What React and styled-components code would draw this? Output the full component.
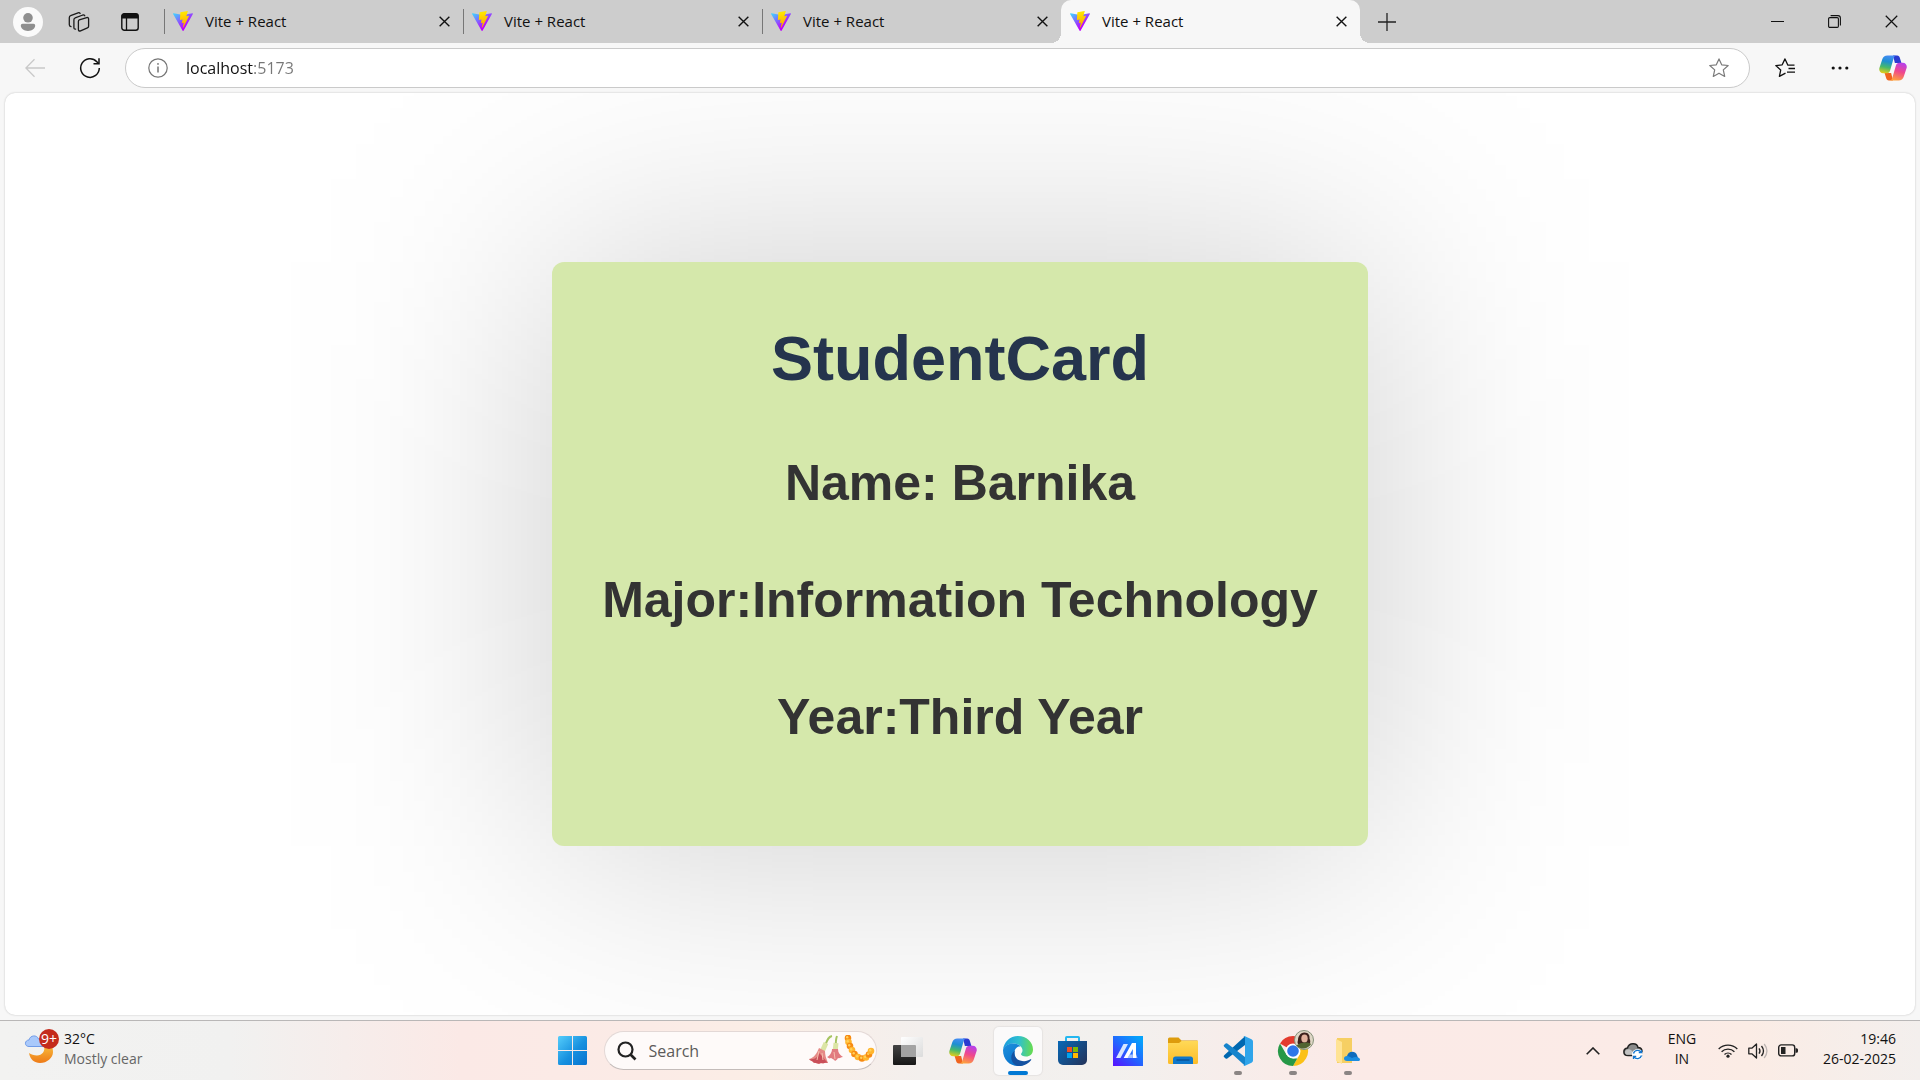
import React from "react";
import styled, { createGlobalStyle, css } from "styled-components";

const uiFont = `"Segoe UI", "Open Sans", "Noto Sans", sans-serif`;

const GlobalStyle = createGlobalStyle`
  *, *::before, *::after { box-sizing: border-box; }
  body { margin: 0; background: #f7f7f7; font-family: ${uiFont}; color: #111; }
  button { font: inherit; color: inherit; border: 0; padding: 0; background: none; cursor: pointer; }
  svg { display: block; flex: none; }
`;

const Desktop = styled.div`
  min-height: 100vh;
  display: flex;
  flex-direction: column;
`;

/* ---------- Tab strip ---------- */

const TabStrip = styled.header`
  display: flex;
  align-items: center;
  height: 43px;
  background: #cdcdcd;
`;

const StripTools = styled.div`
  display: flex;
  align-items: center;
  gap: 21px;
  padding: 0 19px 0 13px;
`;

const IconButton = styled.button`
  display: grid;
  place-items: center;
  flex: none;
  width: ${(p) => p.$w || 30}px;
  height: ${(p) => p.$h || 30}px;
`;

const Tabs = styled.div`
  display: flex;
  flex: 0 1 1196px;
  height: 100%;
  min-width: 0;
`;

const TabItem = styled.div`
  position: relative;
  display: flex;
  align-items: center;
  flex: 1 1 0;
  min-width: 0;
  padding: 0 8px 0 9px;
  ${(p) =>
    p.$active
      ? css`
          background: #f7f7f7;
          border-radius: 10px 10px 0 0;
          &::before,
          &::after {
            content: "";
            position: absolute;
            bottom: 0;
            width: 10px;
            height: 10px;
          }
          &::before {
            right: 100%;
            background: radial-gradient(circle at 0 0, transparent 10px, #f7f7f7 10px);
          }
          &::after {
            left: 100%;
            background: radial-gradient(circle at 100% 0, transparent 10px, #f7f7f7 10px);
          }
        `
      : css`
          &::before {
            content: "";
            position: absolute;
            left: 0;
            top: 9px;
            width: 1px;
            height: 25px;
            background: #777;
          }
        `}
`;

const TabButton = styled.button`
  display: flex;
  align-items: center;
  gap: 12px;
  flex: 1;
  min-width: 0;
  padding-bottom: 1px;
  font-size: 15px;
  line-height: 20px;
  text-align: left;
`;

const NewTab = styled(IconButton)`
  margin: 0 auto 0 12px;
`;

const WindowControls = styled.div`
  display: flex;
`;

/* ---------- Toolbar ---------- */

const Toolbar = styled.div`
  display: flex;
  align-items: center;
  height: 50px;
  padding: 0 4px 0 15px;
  background: #f7f7f7;
`;

const AddressBar = styled.form`
  display: flex;
  align-items: center;
  flex: 1;
  height: 40px;
  margin: 0 10px 0 0;
  padding: 0 15px 0 17px;
  background: #fff;
  border: 1px solid #cacaca;
  border-radius: 20px;
`;

const AddressInput = styled.input`
  flex: 1;
  min-width: 0;
  margin-left: 13px;
  padding: 0;
  border: 0;
  outline: 0;
  font: 16px/24px ${uiFont};
  color: transparent;
  caret-color: #111;
  background: linear-gradient(to right, #111 67px, #777 67px);
  -webkit-background-clip: text;
  background-clip: text;
`;

/* ---------- Page ---------- */

const Viewport = styled.main`
  display: flex;
  align-items: center;
  justify-content: center;
  flex: 1;
  margin: 0 5px 5px;
  overflow: hidden;
  isolation: isolate;
  background: #fff;
  border-radius: 10px;
  box-shadow: 0 0 2px #bbb;
`;

const StudentCard = styled.article`
  position: relative;
  display: flex;
  flex-direction: column;
  align-items: center;
  gap: 60px;
  padding: 60px 50px 100px;
  background: #d5e8ab;
  border-radius: 12px;
  font-family: Arial, "Liberation Sans", sans-serif;
  text-align: center;

  /* wide soft shadow behind the card */
  &::before {
    content: "";
    position: absolute;
    z-index: -1;
    inset: 0;
    background: rgba(0, 0, 0, 0.2);
    filter: blur(125px);
  }
`;

const CardTitle = styled.h1`
  margin: 0;
  font-size: 63px;
  line-height: 73px;
  color: #25344d;
`;

const CardLine = styled.p`
  margin: 0;
  font-size: 50px;
  font-weight: 700;
  line-height: 57px;
  color: #333;
`;

/* ---------- Taskbar ---------- */

const Taskbar = styled.footer`
  display: grid;
  grid-template-columns: 1fr auto 1fr;
  align-items: center;
  height: 60px;
  border-top: 1px solid #b9b7b7;
  background: linear-gradient(
    to right,
    #f2f2f1 0%,
    #f1f1f0 12%,
    #fbe9e6 24%,
    #fbebe6 34%,
    #fbeee6 40%,
    #f3efed 48%,
    #f2f0ee 58%,
    #fbeae7 70%,
    #fbebe7 86%,
    #fbece5 91%,
    #f3efed 100%
  );
`;

const TextButton = styled.button`
  padding-bottom: 3px;
  font-size: 14px;
  line-height: 20px;
`;

const Weather = styled(TextButton)`
  display: flex;
  justify-self: start;
  gap: 4px;
  margin-left: 24px;
  text-align: left;
`;

const Muted = styled.span`
  display: block;
  color: #666;
`;

const Dock = styled.nav`
  display: flex;
  align-items: center;
  gap: 7px;
`;

const DockButton = styled.button`
  position: relative;
  display: grid;
  place-items: center;
  width: 48px;
  height: 48px;
  border-radius: 5px;
  ${(p) => p.$active && css`background: #fbfafa; box-shadow: 0 0 1px 1px #e6e3e2;`}
  ${(p) =>
    (p.$active || p.$running) &&
    css`
      &::after {
        content: "";
        position: absolute;
        bottom: 0;
        left: 50%;
        transform: translateX(-50%);
        width: ${p.$active ? 20 : 8}px;
        height: 4px;
        border-radius: 2px;
        background: ${p.$active ? "#0078d4" : "#8b8584"};
      }
    `}
`;

const SearchBox = styled.label`
  display: flex;
  align-items: center;
  width: 273px;
  height: 39px;
  padding: 0 1px 0 12px;
  gap: 12px;
  border: 1px solid #e3d8d6;
  border-bottom-color: #c4bcba;
  border-radius: 20px;
  background: #fefaf9;
`;

const SearchInput = styled.input`
  flex: 1;
  min-width: 0;
  padding: 0;
  border: 0;
  outline: 0;
  background: none;
  font: 16px/24px ${uiFont};
  color: #222;
  &::placeholder { color: #5c5a5a; opacity: 1; }
`;

const Tray = styled.div`
  display: flex;
  align-items: center;
  justify-self: end;
  padding-right: 24px;
`;

const Language = styled(TextButton)`
  width: 40px;
  margin: 0 16px 0 4px;
`;

const StatusIcons = styled.button`
  display: flex;
  align-items: center;
  gap: 10px;
`;

const Clock = styled(TextButton)`
  margin-left: 25px;
  text-align: right;
`;

/* ---------- Icons ---------- */

const Svg = ({ w = 20, h = w, box, children, ...rest }) => (
  <svg width={w} height={h} viewBox={box || `0 0 ${w} ${h}`} fill="none" aria-hidden="true" {...rest}>
    {children}
  </svg>
);

const ViteLogo = () => (
  <Svg w={20} box="0 0 256 257">
    <defs>
      <linearGradient id="viteBody" x1="-.8%" x2="57.6%" y1="7.7%" y2="78.4%">
        <stop stopColor="#41D1FF" />
        <stop offset="1" stopColor="#BD00FF" />
      </linearGradient>
      <linearGradient id="viteBolt" x1="43.4%" x2="50.3%" y1="2.2%" y2="89%">
        <stop stopColor="#FFEA00" />
        <stop offset="1" stopColor="#FFA800" />
      </linearGradient>
    </defs>
    <path fill="url(#viteBody)" d="M255.153 37.938L134.897 252.976c-2.483 4.44-8.862 4.466-11.382.048L.875 37.958c-2.746-4.814 1.371-10.646 6.827-9.67l120.385 21.517a6.537 6.537 0 0 0 2.322-.004l117.867-21.483c5.438-.991 9.574 4.796 6.877 9.62Z" />
    <path fill="url(#viteBolt)" d="M185.432.063L96.44 17.501a3.268 3.268 0 0 0-2.634 3.014l-5.474 92.456a3.268 3.268 0 0 0 3.997 3.378l24.777-5.718c2.318-.535 4.413 1.507 3.936 3.838l-7.361 36.047c-.495 2.426 1.782 4.5 4.151 3.78l15.304-4.649c2.372-.72 4.652 1.36 4.15 3.788l-11.698 56.621c-.732 3.542 3.979 5.473 5.943 2.437l1.313-2.028l72.516-144.72c1.215-2.423-.88-5.186-3.54-4.672l-25.505 4.922c-2.396.462-4.435-1.77-3.759-4.114l16.646-57.705c.677-2.35-1.37-4.583-3.769-4.113Z" />
  </Svg>
);

const AvatarIcon = () => (
  <Svg w={30}>
    <circle cx="15" cy="15" r="15" fill="#fafafa" />
    <circle cx="15" cy="10.8" r="4.8" fill="#8f8f8f" />
    <path fill="#8f8f8f" d="M9.5 16.8h11a1.7 1.7 0 0 1 1.7 1.7c0 3-3 5.4-7.2 5.4s-7.2-2.4-7.2-5.4a1.7 1.7 0 0 1 1.7-1.7Z" />
  </Svg>
);

const WorkspacesIcon = () => (
  <Svg w={22} stroke="#1b1b1b" strokeWidth="1.3" strokeLinejoin="round" strokeLinecap="round">
    <path d="m11.3 8.8 7.4-2.2q1.9-.5 1.9 1.4v7.2q0 1.2-1.2 1.6l-6.8 3q-2.2.8-2.2-1.4v-8q0-1.3.9-1.6Z" />
    <path d="M7.6 18.2q-1.7.2-1.7-1.6V8.8q0-1.6 1.3-2l7.6-2.8q1.4-.3 2 .8" />
    <path d="M3 15.6q-1.7-.2-1.7-1.8V6.7q0-1.6 1.3-2l7.5-2.9q1.3-.4 2 .6" />
  </Svg>
);

const TabActionsIcon = () => (
  <Svg w={18}>
    <rect x=".8" y=".8" width="16.4" height="16.4" rx="2.5" stroke="#111" strokeWidth="1.4" />
    <path fill="#111" d="M.5 5.5V3A2.5 2.5 0 0 1 3 .5h12A2.5 2.5 0 0 1 17.5 3v2.5Z" />
    <path stroke="#111" strokeWidth="1.3" d="M5.5 5v12" />
  </Svg>
);

const CloseIcon = ({ size = 11, width = 1.5, color = "#111" }) => (
  <Svg w={size} box="0 0 12 12" stroke={color} strokeWidth={width}>
    <path d="m.7.7 10.6 10.6M11.3.7.7 11.3" />
  </Svg>
);

const PlusIcon = () => (
  <Svg w={18} stroke="#222" strokeWidth="1.3">
    <path d="M9 0v18M0 9h18" />
  </Svg>
);

const MinimizeIcon = () => (
  <Svg w={13} stroke="#111" strokeWidth="1">
    <path d="M0 6.5h13" />
  </Svg>
);

const RestoreIcon = () => (
  <Svg w={13} stroke="#111" strokeWidth="1.1">
    <rect x=".6" y="2.6" width="9.8" height="9.8" rx="1.2" />
    <path d="M2.6.6h7.4q2.4 0 2.4 2.4v7.4" />
  </Svg>
);

const BackIcon = () => (
  <Svg w={20} stroke="#c9c9c9" strokeWidth="1.3">
    <path d="M20 10H1M9.5 1.3.9 10l8.6 8.7" />
  </Svg>
);

const ReloadIcon = () => (
  <Svg w={22} stroke="#111" strokeWidth="1.5">
    <path d="M20.3 11A9.3 9.3 0 1 1 17.8 4.7l1.8 1.9" />
    <path d="M20 1.3v5.5h-5.5" />
  </Svg>
);

const InfoIcon = () => (
  <Svg w={20} stroke="#757575" strokeWidth="1.2">
    <circle cx="10" cy="10" r="9.2" />
    <path d="M10 8.5v6" strokeWidth="1.5" />
    <circle cx="10" cy="5.9" r=".9" fill="#757575" stroke="none" />
  </Svg>
);

const StarIcon = () => (
  <Svg w={20} stroke="#7a7a7a" strokeWidth="1.2" strokeLinejoin="round">
    <path d="m10 .9 2.7 5.9 6.5.7-4.9 4.4 1.4 6.5L10 15.200l-5.7 3.2 1.4-6.5L.8 7.500l6.500-.7Z" />
  </Svg>
);

const FavoritesIcon = () => (
  <Svg w={20} stroke="#111" strokeWidth="1.3" strokeLinejoin="round">
    <path d="M19.5 7.2h-6.6L10 .9 7.2 6.8l-6.4.8 4.9 4.5-1.3 6.3 6.1-3.3" />
    <path d="M13.5 10.5H20M12 14.2h8" />
  </Svg>
);

const MoreIcon = () => (
  <Svg w={18} h={4}>
    <circle cx="2.2" cy="2" r="1.6" fill="#111" />
    <circle cx="9" cy="2" r="1.6" fill="#111" />
    <circle cx="15.8" cy="2" r="1.6" fill="#111" />
  </Svg>
);

const CopilotIcon = ({ id }) => (
  <Svg w={28} h={26}>
    <defs>
      <linearGradient id={`${id}a`} x1="10" y1="0" x2="6" y2="19" gradientUnits="userSpaceOnUse">
        <stop stopColor="#4a8cf8" />
        <stop offset=".35" stopColor="#1d8fd2" />
        <stop offset=".65" stopColor="#45b96c" />
        <stop offset="1" stopColor="#f3cf12" />
      </linearGradient>
      <linearGradient id={`${id}b`} x1="23" y1="7" x2="17" y2="26" gradientUnits="userSpaceOnUse">
        <stop stopColor="#b13ff5" />
        <stop offset=".5" stopColor="#f0488c" />
        <stop offset="1" stopColor="#ffa53a" />
      </linearGradient>
    </defs>
    <path fill="#2b3bd0" d="M14 .5h4.200c1.500 0 2.200 1 2.700 2.500l1.500 5h-6.500Z" />
    <path fill="#f0641e" d="M14 25.500H9.800c-1.500 0-2.200-1-2.700-2.500l-1.500-5h6.500Z" />
    <path fill={`url(#${id}a)`} d="M8.4.5h9c-1.500 0-2.200 1-2.700 2.500l-3.600 12.500c-.6 1.900-1.600 2.800-3.500 2.800H4.300C1.200 18.300-.3 15.800.4 13L3.200 4.400C4 1.900 5.800.5 8.400.5Z" />
    <path fill={`url(#${id}b)`} d="M19.600 25.500h-9c1.500 0 2.200-1 2.700-2.500l3.600-12.500c.6-1.900 1.600-2.800 3.500-2.800h3.300c3.100 0 4.600 2.500 3.900 5.300l-2.800 8.600c-.8 2.500-2.600 3.900-5.200 3.900Z" />
  </Svg>
);

const BadgeText = styled.text`
  font: 14px ${uiFont};
  fill: #fff;
`;

const WeatherIcon = () => (
  <Svg w={36} h={36}>
    <defs>
      <linearGradient id="moon" x1="0" y1="16" x2="0" y2="34" gradientUnits="userSpaceOnUse">
        <stop stopColor="#f8bd3d" />
        <stop offset="1" stopColor="#ee7a17" />
      </linearGradient>
    </defs>
    <path fill="url(#moon)" d="M20 17c1.500 5-2 9.500-7 9.500-3 0-6-1.200-8-2.500C6 30.500 10.500 34 16 34c7 0 13-5 13-11 0-3-1-6-2-7Z" />
    <path fill="#a9c9fb" stroke="#6f9be8" strokeWidth="1" d="M5 17.500c-5 0-4.500-6.500 0-6.500C6 6 13 5.500 14.500 10c3.500-.5 5 1.500 5 4v3.500Z" />
    <circle cx="25" cy="10" r="10" fill="#c42b1c" />
    <BadgeText x="25" y="15" textAnchor="middle">9+</BadgeText>
  </Svg>
);

const StartIcon = () => (
  <Svg w={29}>
    <defs>
      <linearGradient id="win" x1="0" y1="0" x2="29" y2="29" gradientUnits="userSpaceOnUse">
        <stop stopColor="#55cdfb" />
        <stop offset=".55" stopColor="#1690df" />
        <stop offset="1" stopColor="#0772cf" />
      </linearGradient>
    </defs>
    <path fill="url(#win)" d="M1.500 0H14v14H0V1.500A1.500 1.500 0 0 1 1.500 0ZM15 0h12.500A1.500 1.500 0 0 1 29 1.500V14H15ZM0 15h14v14H1.500A1.500 1.500 0 0 1 0 27.500ZM15 15h14v12.500a1.500 1.500 0 0 1-1.500 1.500H15Z" />
  </Svg>
);

const SearchIcon = () => (
  <Svg w={20} stroke="#222" strokeWidth="2.2">
    <circle cx="8.500" cy="8.500" r="7" />
    <path d="m13.500 13.500 5 5" strokeWidth="2.6" />
  </Svg>
);

const marigolds = [
  [39, 3], [39.5, 7], [41, 11], [43, 15], [45.5, 19], [49, 22], [53, 23.5], [57, 22.5], [60, 19.5], [62, 16],
];

const FlowersArt = () => (
  <Svg w={66} h={32}>
    <path d="M23 1c-5 1-5 6-8 12M28 1c-2 5-1 9-1 15" stroke="#a6c462" strokeWidth="2" />
    <path d="m17 8-5 11M27 8l-1 10" stroke="#dce5a5" strokeWidth="5" />
    <path fill="#e58a86" d="m10 13 6 3c0 4 1 7 3 12-3-1-4 1-7 0-3 2-5-1-7 0-1-2-4-2-5-4 5-1 8-6 10-11Z" />
    <path fill="#c94f59" d="M10 18c-1 4-4 7-10 6 2 2 4 2 5 4 2-1 4 2 7 0 3 1 4-1 7 0-2-2-4-4-5-6Z" />
    <path fill="#e17b80" d="M23 14h6c0 4 2 6 5 8-3 0-3 2-5 1-1 2-2 2-3 3-1-2-3-2-4-3-2 1-2 0-4-1 3-1 5-5 5-8Z" />
    <path d="m25 17 1 7m-16-8-2 9m5-7 1 7" stroke="#f6c0ad" />
    {marigolds.map(([x, y], i) => (
      <g key={i}>
        <circle cx={x} cy={y} r="3.3" fill={i % 2 ? "#ffb52d" : "#f78a12"} />
        <circle cx={x - 0.8} cy={y - 0.8} r="1.2" fill="#ffd15c" />
      </g>
    ))}
  </Svg>
);

const TaskViewIcon = () => (
  <Svg w={30} h={28}>
    <defs>
      <linearGradient id="tvBack" x1="0" y1="8" x2="0" y2="28" gradientUnits="userSpaceOnUse">
        <stop stopColor="#444" />
        <stop offset="1" stopColor="#171717" />
      </linearGradient>
      <linearGradient id="tvFront" x1="8" y1="0" x2="28" y2="20" gradientUnits="userSpaceOnUse">
        <stop stopColor="#fff" />
        <stop offset="1" stopColor="#ddd" />
      </linearGradient>
    </defs>
    <rect y="8" width="23" height="20" rx="1" fill="url(#tvBack)" />
    <rect x="8" width="22" height="20" rx="1" fill="url(#tvFront)" />
    <path fill="#a3a3a3" d="M8 8h14a1 1 0 0 1 1 1v11H8Z" />
  </Svg>
);

const EdgeIcon = () => (
  <Svg w={30}>
    <defs>
      <linearGradient id="edgeTop" x1="1" y1="10" x2="30" y2="12" gradientUnits="userSpaceOnUse">
        <stop stopColor="#1b9ede" />
        <stop offset=".5" stopColor="#2fc0cf" />
        <stop offset="1" stopColor="#68dc4d" />
      </linearGradient>
      <linearGradient id="edgeSide" x1="0" y1="10" x2="14" y2="30" gradientUnits="userSpaceOnUse">
        <stop stopColor="#1d8edb" />
        <stop offset="1" stopColor="#0670cb" />
      </linearGradient>
    </defs>
    <path fill="url(#edgeTop)" d="M0 14C.8 6 7 0 15 0c8.500 0 15 6 15 13.500 0 4.500-3 7-7 7-3 0-5-1-5-2.200 0-1 1.500-1.500 1.500-4 0-3.500-4-6.800-9-6.800C5 7.500 1 10.500 0 14Z" />
    <path fill="url(#edgeSide)" d="M0 14c1-4 5-6.500 10.500-6.500 3 0 5.500 1.300 7 3-3.500-.5-6 2.500-6 6 0 7 7 13 12 11C21 29.200 18 30 15 30 6.500 30 0 23.500 0 14Z" />
    <path fill="#1552a1" d="M12 14.500c-1 1.500-1.500 8 5 10 4.500 1.400 8 .3 10.300-1.200.8-.5 1.300.2.9.8C25.500 28 20 30.500 15.500 30 8 29 5.500 19 12 14.500Z" />
  </Svg>
);

const StoreIcon = () => (
  <Svg w={29} h={29}>
    <defs>
      <linearGradient id="store" x1="0" y1="4" x2="29" y2="29" gradientUnits="userSpaceOnUse">
        <stop stopColor="#0769b8" />
        <stop offset="1" stopColor="#243259" />
      </linearGradient>
    </defs>
    <path d="M8 7V1.800q0-.8.800-.8h11.400q.8 0 .8.800V7" stroke="#24b7f0" strokeWidth="2" />
    <path fill="url(#store)" d="M0 5h29v19a5 5 0 0 1-5 5H5a5 5 0 0 1-5-5Z" />
    <path fill="#f25022" d="M9 11h5v5H9z" />
    <path fill="#7fba00" d="M15 11h5v5h-5z" />
    <path fill="#00a4ef" d="M9 17h5v5H9z" />
    <path fill="#ffb900" d="M15 17h5v5h-5z" />
  </Svg>
);

const MyAsusIcon = () => (
  <Svg w={30}>
    <defs>
      <linearGradient id="asus" x1="2" y1="30" x2="26" y2="2" gradientUnits="userSpaceOnUse">
        <stop stopColor="#5514ff" />
        <stop offset=".5" stopColor="#2463ff" />
        <stop offset="1" stopColor="#05a2fb" />
      </linearGradient>
    </defs>
    <path fill="url(#asus)" d="M0 0h30v30H0z" />
    <path fill="#d8e6ff" d="M10.500 8H15L7.500 22H3Z" />
    <path fill="#fff" d="M19 7h4v15h-3.200V13L15 22h-4.300Z" />
    <path fill="#a9c4ff" d="M16.500 18.500h3.300V22h-5.300ZM23 18l1.500 4H23Z" />
  </Svg>
);

const ExplorerIcon = () => (
  <Svg w={30} h={27}>
    <defs>
      <linearGradient id="fold" x1="0" y1="4" x2="0" y2="27" gradientUnits="userSpaceOnUse">
        <stop stopColor="#ffd957" />
        <stop offset="1" stopColor="#fcbc28" />
      </linearGradient>
    </defs>
    <path fill="#dd9c0d" d="M1.500.5h9L13.500 3.500H29q1 0 1 1V12H0V2Q0 .5 1.500.5Z" />
    <path fill="url(#fold)" d="M0 6h11l2.500-2H30v21.500q0 1.500-1.500 1.500h-27Q0 27 0 25.500Z" />
    <path fill="#0f78cc" d="M5 27v-5q0-2.500 2.500-2.500h15q2.500 0 2.500 2.500v5Z" />
    <path stroke="#074b8a" strokeWidth="1.2" d="M8.500 23h13" />
  </Svg>
);

const VsCodeIcon = () => (
  <Svg w={30}>
    <path fill="#0068b0" d="M22 .2 1.200 19.200q-1.200 1 0 2L2.600 22.400q.8.700 1.700 0L22 9Z" />
    <path fill="#1684cc" d="M22 29.800 1.200 10.800q-1.200-1 0-2L2.600 7.600q.8-.7 1.700 0L22 21Z" />
    <path fill="#2fa4ea" d="m22 .2 6.500 3Q30 4 30 5.500v19q0 1.500-1.500 2.300l-6.500 3q-1 .3-1.600-.5Q22 29.500 22 28V2q0-1.500-1.600-1.300.7-.9 1.600-.5Z" />
  </Svg>
);

const ChromeIcon = () => (
  <Svg w={42} h={42} box="-6 0 42 42">
    <path fill="#e33b2e" d="M15 21 2 13.500A15 15 0 0 1 28 13.500Z" />
    <path fill="#fbc116" d="M28 13.500A15 15 0 0 1 15 36l6.500-11.200V13.500Z" />
    <path fill="#279847" d="M2 13.500 8.500 24.800 15 28.500h4.300L15 36A15 15 0 0 1 2 13.500Z" />
    <circle cx="15" cy="21" r="7.500" fill="#fff" />
    <circle cx="15" cy="21" r="5.800" fill="#2f76e8" />
    <circle cx="26" cy="10" r="9.500" fill="#ded6c5" stroke="#85917a" />
    <path fill="#3c211c" d="M20 10c0-3 2-7.500 6.500-7.500 4 0 5.500 3 5 6 1 2 1 4 0 6H21c-2-1-1.500-2.500-1-4.500Z" />
    <ellipse cx="26.500" cy="8.500" rx="3.200" ry="4" fill="#e2b29d" />
    <path fill="#51632f" d="M18.500 15.500c3-3 11-4 14.500-1.500a9 9 0 0 1-14.500 1.500Z" />
  </Svg>
);

const OneDriveFolderIcon = () => (
  <Svg w={24} h={26}>
    <path fill="#f6cf63" d="M1 0h15v25H1Z" />
    <path fill="#ffe394" d="M0 1 6 4v22l-6-3Z" />
    <path fill="#0f6cbd" d="M11 18c1-5 8-6 10-1l1 3H11Z" />
    <path fill="#1b8ee0" d="M11 23c-4 0-4-5 0-5 2 0 3 1 5 2 3-2 8-1 8 1.500 0 1-1 1.500-2 1.500Z" />
  </Svg>
);

const ChevronIcon = () => (
  <Svg w={14} h={8} stroke="#222" strokeWidth="1.6">
    <path d="m.7 7.300 6.300-6.300 6.300 6.300" />
  </Svg>
);

const CloudSyncIcon = () => (
  <Svg w={20} h={18}>
    <path fill="#8a8a8a" stroke="#222" strokeWidth="1.5" d="M5 13.500C-.5 13.500-.3 6.500 4.500 6 6 .5 14 .5 15 5.500c3 0 4 2 4 4v4Z" />
    <path fill="#c2c2c2" d="M5 12.800c-4 0-4-5 0-5.600 3 0 5 2 7 5.600Z" />
    <circle cx="14.500" cy="12.500" r="5.500" fill="#fff" />
    <path stroke="#1275cf" strokeWidth="1.3" d="M10.500 11.500a4.200 4.200 0 0 1 7.600-1.200M18.500 13.500a4.200 4.200 0 0 1-7.600 1.200M18.500 8v2.700h-2.700M10.500 17v-2.700h2.700" />
  </Svg>
);

const WifiIcon = () => (
  <Svg w={20} h={15} stroke="#222" strokeWidth="1.4">
    <path d="M.7 6a13.200 13.200 0 0 1 18.600 0M3.600 8.800a9 9 0 0 1 12.800 0M6.500 11.600a5 5 0 0 1 7 0" />
    <circle cx="10" cy="13.200" r="1.600" fill="#222" stroke="none" />
  </Svg>
);

const VolumeIcon = () => (
  <Svg w={20} h={16} stroke="#222" strokeWidth="1.3" strokeLinejoin="round">
    <path d="M.8 5.200v5.600h3L8.500 15V1L3.800 5.200Z" />
    <path d="M11 5.300q2 2.700 0 5.400M13.500 3q4 5 0 10" />
    <path stroke="#bdb5b3" d="M16.200 1q5.500 7 0 14" />
  </Svg>
);

const BatteryIcon = () => (
  <Svg w={20} h={13}>
    <rect x=".7" y=".9" width="16" height="11" rx="2.5" stroke="#222" strokeWidth="1.4" />
    <path fill="#222" d="M3 3h4.500v7H3ZM17.500 4.300h1q1.500 0 1.500 1.500v1.400q0 1.500-1.500 1.500h-1Z" />
  </Svg>
);

/* ---------- App ---------- */

const tabTitles = ["Vite + React", "Vite + React", "Vite + React", "Vite + React"];

const student = [
  ["Name: ", "Barnika"],
  ["Major:", "Information Technology"],
  ["Year:", "Third Year"],
];

const dockApps = [
  { name: "Task view", icon: <TaskViewIcon /> },
  { name: "Copilot", icon: <CopilotIcon id="dockCopilot" /> },
  { name: "Microsoft Edge", icon: <EdgeIcon />, active: true },
  { name: "Microsoft Store", icon: <StoreIcon /> },
  { name: "MyASUS", icon: <MyAsusIcon /> },
  { name: "File Explorer", icon: <ExplorerIcon /> },
  { name: "Visual Studio Code", icon: <VsCodeIcon />, running: true },
  { name: "Google Chrome", icon: <ChromeIcon />, running: true },
  { name: "OneDrive folder", icon: <OneDriveFolderIcon />, running: true },
];

export default function App() {
  return (
    <>
      <GlobalStyle />
      <Desktop>
        <TabStrip>
          <StripTools>
            <IconButton aria-label="Profile"><AvatarIcon /></IconButton>
            <IconButton aria-label="Workspaces"><WorkspacesIcon /></IconButton>
            <IconButton aria-label="Tab actions"><TabActionsIcon /></IconButton>
          </StripTools>
          <Tabs role="tablist">
            {tabTitles.map((title, i) => {
              const active = i === tabTitles.length - 1;
              return (
                <TabItem key={i} $active={active}>
                  <TabButton role="tab" aria-selected={active}>
                    <ViteLogo />
                    {title}
                  </TabButton>
                  <IconButton $w={22} $h={22} aria-label="Close tab"><CloseIcon /></IconButton>
                </TabItem>
              );
            })}
          </Tabs>
          <NewTab aria-label="New tab"><PlusIcon /></NewTab>
          <WindowControls>
            <IconButton $w={57} $h={43} aria-label="Minimize"><MinimizeIcon /></IconButton>
            <IconButton $w={57} $h={43} aria-label="Restore"><RestoreIcon /></IconButton>
            <IconButton $w={57} $h={43} aria-label="Close window"><CloseIcon size={13} width={1.1} /></IconButton>
          </WindowControls>
        </TabStrip>

        <Toolbar>
          <IconButton $w={40} $h={40} aria-label="Back"><BackIcon /></IconButton>
          <IconButton $w={70} $h={40} aria-label="Reload"><ReloadIcon /></IconButton>
          <AddressBar onSubmit={(e) => e.preventDefault()}>
            <IconButton type="button" aria-label="Site information"><InfoIcon /></IconButton>
            <AddressInput aria-label="Address" defaultValue="localhost:5173" />
            <IconButton type="button" aria-label="Add to favorites"><StarIcon /></IconButton>
          </AddressBar>
          <IconButton $w={50} $h={40} aria-label="Favorites"><FavoritesIcon /></IconButton>
          <IconButton $w={60} $h={40} aria-label="Settings and more"><MoreIcon /></IconButton>
          <IconButton $w={46} $h={40} aria-label="Copilot"><CopilotIcon id="barCopilot" /></IconButton>
        </Toolbar>

        <Viewport>
          <StudentCard>
            <CardTitle>StudentCard</CardTitle>
            {student.map(([label, value]) => (
              <CardLine key={label}>{label}{value}</CardLine>
            ))}
          </StudentCard>
        </Viewport>

        <Taskbar>
          <Weather>
            <WeatherIcon />
            <span>
              32°C
              <Muted>Mostly clear</Muted>
            </span>
          </Weather>
          <Dock aria-label="Taskbar">
            <DockButton aria-label="Start"><StartIcon /></DockButton>
            <SearchBox>
              <SearchIcon />
              <SearchInput aria-label="Search" placeholder="Search" />
              <FlowersArt />
            </SearchBox>
            {dockApps.map((app) => (
              <DockButton key={app.name} aria-label={app.name} $active={app.active} $running={app.running}>
                {app.icon}
              </DockButton>
            ))}
          </Dock>
          <Tray>
            <IconButton aria-label="Show hidden icons"><ChevronIcon /></IconButton>
            <IconButton $w={50} aria-label="OneDrive"><CloudSyncIcon /></IconButton>
            <Language>ENG<br />IN</Language>
            <StatusIcons aria-label="Network, volume and battery">
              <WifiIcon />
              <VolumeIcon />
              <BatteryIcon />
            </StatusIcons>
            <Clock>19:46<br />26-02-2025</Clock>
          </Tray>
        </Taskbar>
      </Desktop>
    </>
  );
}
